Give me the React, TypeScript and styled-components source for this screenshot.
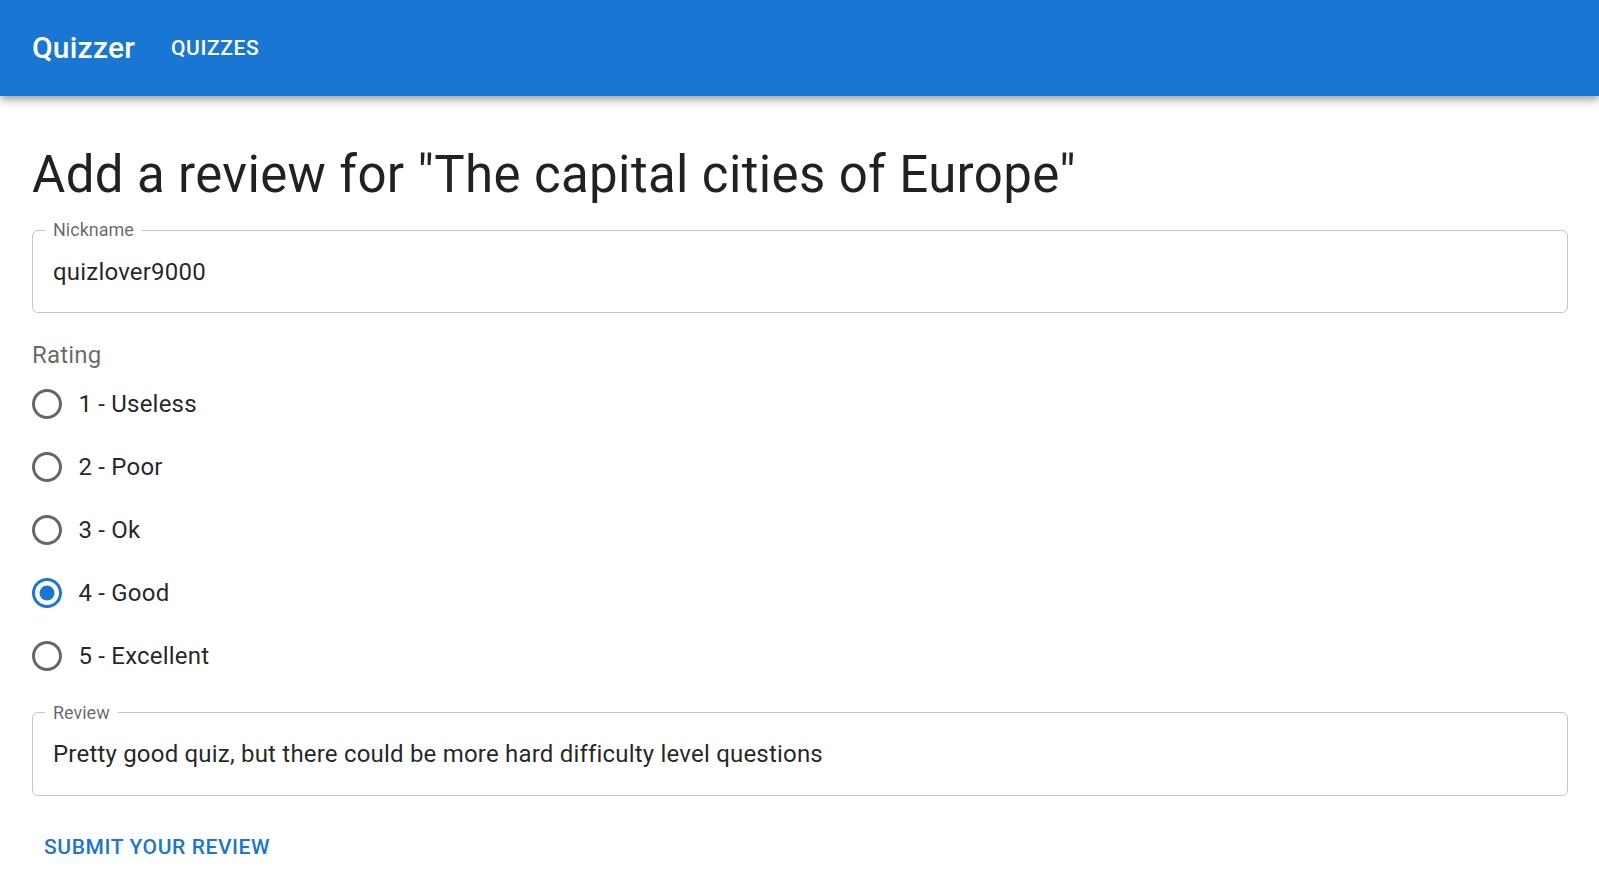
import React, { useState } from "react";
import styled, { createGlobalStyle } from "styled-components";

const Global = createGlobalStyle`
  html, body { margin: 0; padding: 0; background: #fff; }
  body { font-family: Roboto, "Liberation Sans", Arial, sans-serif; color: rgba(0,0,0,0.87); }
  * { box-sizing: border-box; }
`;

const AppBar = styled.header`
  height: 96px;
  background: #1976d2;
  color: #fff;
  display: flex;
  align-items: center;
  padding: 0 32px;
  box-shadow: 0px 3px 6px -1.5px rgba(0,0,0,0.2), 0px 6px 7.5px 0px rgba(0,0,0,0.14), 0px 1.5px 15px 0px rgba(0,0,0,0.12);
  position: relative;
  z-index: 1;
`;

const Brand = styled.div`
  font-size: 30px;
  font-weight: 500;
  letter-spacing: 0.2px;
  line-height: 1.6;
  margin-right: 24px;
`;

const NavButton = styled.button`
  background: none;
  border: 0;
  color: #fff;
  font-family: inherit;
  font-size: 21px;
  font-weight: 500;
  letter-spacing: 0.6px;
  text-transform: uppercase;
  padding: 9px 12px;
  line-height: 1.75;
  cursor: pointer;
`;

const Main = styled.main`
  padding: 47px 31px 0 32px;
  display: flex;
  flex-direction: column;
`;

const Title = styled.h1`
  margin: 0;
  font-size: 51px;
  font-weight: 400;
  line-height: 63px;
  letter-spacing: 0.37px;
  color: rgba(0,0,0,0.87);
`;

const Field = styled.div<{ $top: number }>`
  position: relative;
  margin-top: ${(p) => p.$top}px;
  height: 83px;
`;

const Outline = styled.fieldset`
  position: absolute;
  top: -9px;
  left: 0;
  right: 0;
  bottom: 0;
  margin: 0;
  padding: 0 12px;
  border: 1.5px solid rgba(0,0,0,0.23);
  border-radius: 6px;
  pointer-events: none;
`;

const Legend = styled.legend`
  font-size: 18px;
  line-height: 18px;
  padding: 0 8px;
  color: rgba(0,0,0,0.6);
`;

const Input = styled.input`
  width: 100%;
  height: 100%;
  border: 0;
  outline: none;
  background: transparent;
  font-family: inherit;
  font-size: 24px;
  color: rgba(0,0,0,0.87);
  padding: 0 21px;
  letter-spacing: 0.2px;
`;

const GroupLabel = styled.div`
  margin-top: 26px;
  font-size: 24px;
  line-height: 33.5px;
  color: rgba(0,0,0,0.6);
  letter-spacing: 0.2px;
`;

const RadioGroup = styled.div`
  display: flex;
  flex-direction: column;
`;

const RadioRow = styled.label`
  display: flex;
  align-items: center;
  height: 63px;
  margin-left: -16.5px;
  cursor: pointer;
  font-size: 24px;
  letter-spacing: 0.2px;
  color: rgba(0,0,0,0.87);
`;

const RadioIcon = styled.span<{ $checked: boolean }>`
  display: inline-flex;
  padding: 13.5px;
  color: ${(p) => (p.$checked ? "#1976d2" : "rgba(0,0,0,0.6)")};
  svg { width: 36px; height: 36px; display: block; }
`;

const SubmitButton = styled.button`
  align-self: flex-start;
  margin-top: 24px;
  background: none;
  border: 0;
  color: #1976d2;
  font-family: inherit;
  font-size: 21px;
  font-weight: 500;
  letter-spacing: 0.6px;
  text-transform: uppercase;
  padding: 9px 12px;
  line-height: 1.75;
  cursor: pointer;
`;

const options = ["1 - Useless", "2 - Poor", "3 - Ok", "4 - Good", "5 - Excellent"];

function Radio({ checked }: { checked: boolean }) {
  return (
    <RadioIcon $checked={checked}>
      <svg viewBox="0 0 24 24" fill="currentColor">
        <path d="M12 2C6.48 2 2 6.48 2 12s4.48 10 10 10 10-4.48 10-10S17.52 2 12 2zm0 18c-4.42 0-8-3.58-8-8s3.58-8 8-8 8 3.58 8 8-3.58 8-8 8z" />
        {checked && <circle cx="12" cy="12" r="5" />}
      </svg>
    </RadioIcon>
  );
}

export default function App() {
  const [rating, setRating] = useState(3);
  const [nick, setNick] = useState("quizlover9000");
  const [review, setReview] = useState(
    "Pretty good quiz, but there could be more hard difficulty level questions"
  );
  return (
    <>
      <Global />
      <AppBar>
        <Brand>Quizzer</Brand>
        <NavButton>Quizzes</NavButton>
      </AppBar>
      <Main>
        <Title>Add a review for "The capital cities of Europe"</Title>
        <Field $top={24}>
          <Input value={nick} onChange={(e) => setNick(e.target.value)} />
          <Outline>
            <Legend>Nickname</Legend>
          </Outline>
        </Field>
        <GroupLabel>Rating</GroupLabel>
        <RadioGroup>
          {options.map((o, i) => (
            <RadioRow key={o} onClick={() => setRating(i)}>
              <Radio checked={rating === i} />
              {o}
            </RadioRow>
          ))}
        </RadioGroup>
        <Field $top={25}>
          <Input value={review} onChange={(e) => setReview(e.target.value)} />
          <Outline>
            <Legend>Review</Legend>
          </Outline>
        </Field>
        <SubmitButton>Submit your review</SubmitButton>
      </Main>
    </>
  );
}
